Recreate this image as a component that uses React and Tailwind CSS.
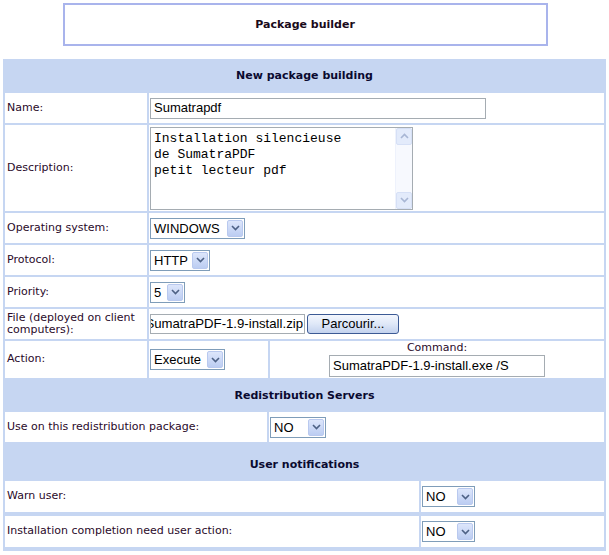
import React from "react";

function Arrow({ up, color = "#4d6185" }) {
  return (
    <svg width="9" height="6" viewBox="0 0 9 6" className="block">
      {up ? (
        <path d="M1 5 L4.5 1.5 L8 5" fill="none" stroke={color} strokeWidth="1.6" />
      ) : (
        <path d="M1 1 L4.5 4.5 L8 1" fill="none" stroke={color} strokeWidth="1.6" />
      )}
    </svg>
  );
}

function Select({ value, w }) {
  return (
    <div
      className={`${w} h-[21px] border border-[#7f9db9] bg-white flex items-stretch font-['Liberation_Sans'] text-[13px] text-black`}
    >
      <div className="flex-1 flex items-center pl-[3px] leading-none overflow-hidden whitespace-nowrap">{value}</div>
      <div className="w-[16px] m-[1px] rounded-[2px] border border-[#b9c9ef] bg-gradient-to-b from-[#dde6fb] to-[#bccdf2] flex items-center justify-center">
        <Arrow />
      </div>
    </div>
  );
}

function Row({ label, children, h, labelW = "w-[142px]" }) {
  return (
    <div className={`flex gap-[2px] ${h}`}>
      <div className={`${labelW} shrink-0 bg-white flex items-center pl-[2px] text-[#2a0a2a]`}>{label}</div>
      <div className="flex-1 bg-white flex items-center pl-[1px]">{children}</div>
    </div>
  );
}

function Header({ children, h, pt = "pt-[2px]" }) {
  return (
    <div className={`${h} flex items-center justify-center ${pt} font-bold text-[#0a0a30]`}>{children}</div>
  );
}

export default function App() {
  return (
    <div className="w-[609px] h-[555px] bg-white font-['DejaVu_Sans',sans-serif] text-[11px] overflow-hidden">
      <div className="pt-[3px] flex justify-center">
        <div className="w-[485px] h-[43px] border-2 border-[#a9b4ec] flex items-center justify-center pt-[1px] font-bold text-[#1a0a1a] ml-[1px]">
          Package builder
        </div>
      </div>
      <div className="mt-[13px] ml-[3px] w-[603px] bg-[#c6d6f2] px-[2px] pb-[4px] flex flex-col gap-[2px]">
        <Header h="h-[32px]">New package building</Header>
        <Row label="Name:" h="h-[30px]">
          <div className="w-[336px] h-[21px] border border-[#a5acb2] flex items-center pl-[3px] font-['Liberation_Sans'] text-[13px] text-black">
            Sumatrapdf
          </div>
        </Row>
        <Row label="Description:" h="h-[86px]">
          <div className="w-[263px] h-[83px] border border-[#a5acb2] flex font-['Liberation_Mono'] text-[13px] leading-[16px] text-black">
            <div className="flex-1 pl-[3px] pt-[3px] whitespace-pre">
              {"Installation silencieuse\nde SumatraPDF\npetit lecteur pdf"}
            </div>
            <div className="w-[17px] bg-[#f7f9fe] border-l border-[#eef2fc] flex flex-col justify-between">
              <div className="h-[17px] rounded-[2px] border border-[#d6e0f6] bg-[#e3ebfb] flex items-center justify-center">
                <Arrow up color="#a8b6d4" />
              </div>
              <div className="h-[17px] rounded-[2px] border border-[#d6e0f6] bg-[#e3ebfb] flex items-center justify-center">
                <Arrow color="#a8b6d4" />
              </div>
            </div>
          </div>
        </Row>
        <Row label="Operating system:" h="h-[30px]">
          <Select value="WINDOWS" w="w-[95px]" />
        </Row>
        <Row label="Protocol:" h="h-[30px]">
          <Select value="HTTP" w="w-[60px]" />
        </Row>
        <Row label="Priority:" h="h-[30px]">
          <Select value="5" w="w-[35px]" />
        </Row>
        <Row label={<span className="leading-[12px]">File (deployed on client computers):</span>} h="h-[30px]">
          <div className="flex items-center gap-[2px]">
            <div className="w-[155px] h-[20px] border border-[#a5acb2] overflow-hidden flex items-center justify-end pr-[1px] font-['Liberation_Sans'] text-[13.2px] text-black">
              <span className="whitespace-nowrap shrink-0">SumatraPDF-1.9-install.zip</span>
            </div>
            <div className="w-[92px] h-[20px] rounded-[3px] border border-[#3c5a95] bg-gradient-to-b from-[#f4f7fd] via-[#dfe8f8] to-[#c3d2ee] flex items-center justify-center font-['Liberation_Sans'] text-[13px] text-black">
              Parcourir...
            </div>
          </div>
        </Row>
        <div className="flex gap-[2px] h-[37px]">
          <div className="w-[142px] shrink-0 bg-white flex items-center pl-[2px] text-[#2a0a2a]">Action:</div>
          <div className="w-[119px] shrink-0 bg-white flex items-center pl-[1px]">
            <Select value="Execute" w="w-[75px]" />
          </div>
          <div className="flex-1 bg-white flex flex-col items-center">
            <div className="h-[14px] leading-[14px] text-[#2a0a2a]">Command:</div>
            <div className="w-[216px] h-[22px] border border-[#a5acb2] flex items-center pl-[3px] font-['Liberation_Sans'] text-[13px] text-black">
              SumatraPDF-1.9-install.exe /S
            </div>
          </div>
        </div>
        <Header h="h-[30px]">Redistribution Servers</Header>
        <Row label="Use on this redistribution package:" h="h-[30px]" labelW="w-[262px]">
          <Select value="NO" w="w-[56px]" />
        </Row>
        <Header h="h-[35px]" pt="pt-[7px]">User notifications</Header>
        <div className="flex flex-col gap-[4px]">
          <Row label="Warn user:" h="h-[31px]" labelW="w-[414px]">
            <Select value="NO" w="w-[53px]" />
          </Row>
          <Row label="Installation completion need user action:" h="h-[31px]" labelW="w-[414px]">
            <Select value="NO" w="w-[53px]" />
          </Row>
        </div>
      </div>
    </div>
  );
}
